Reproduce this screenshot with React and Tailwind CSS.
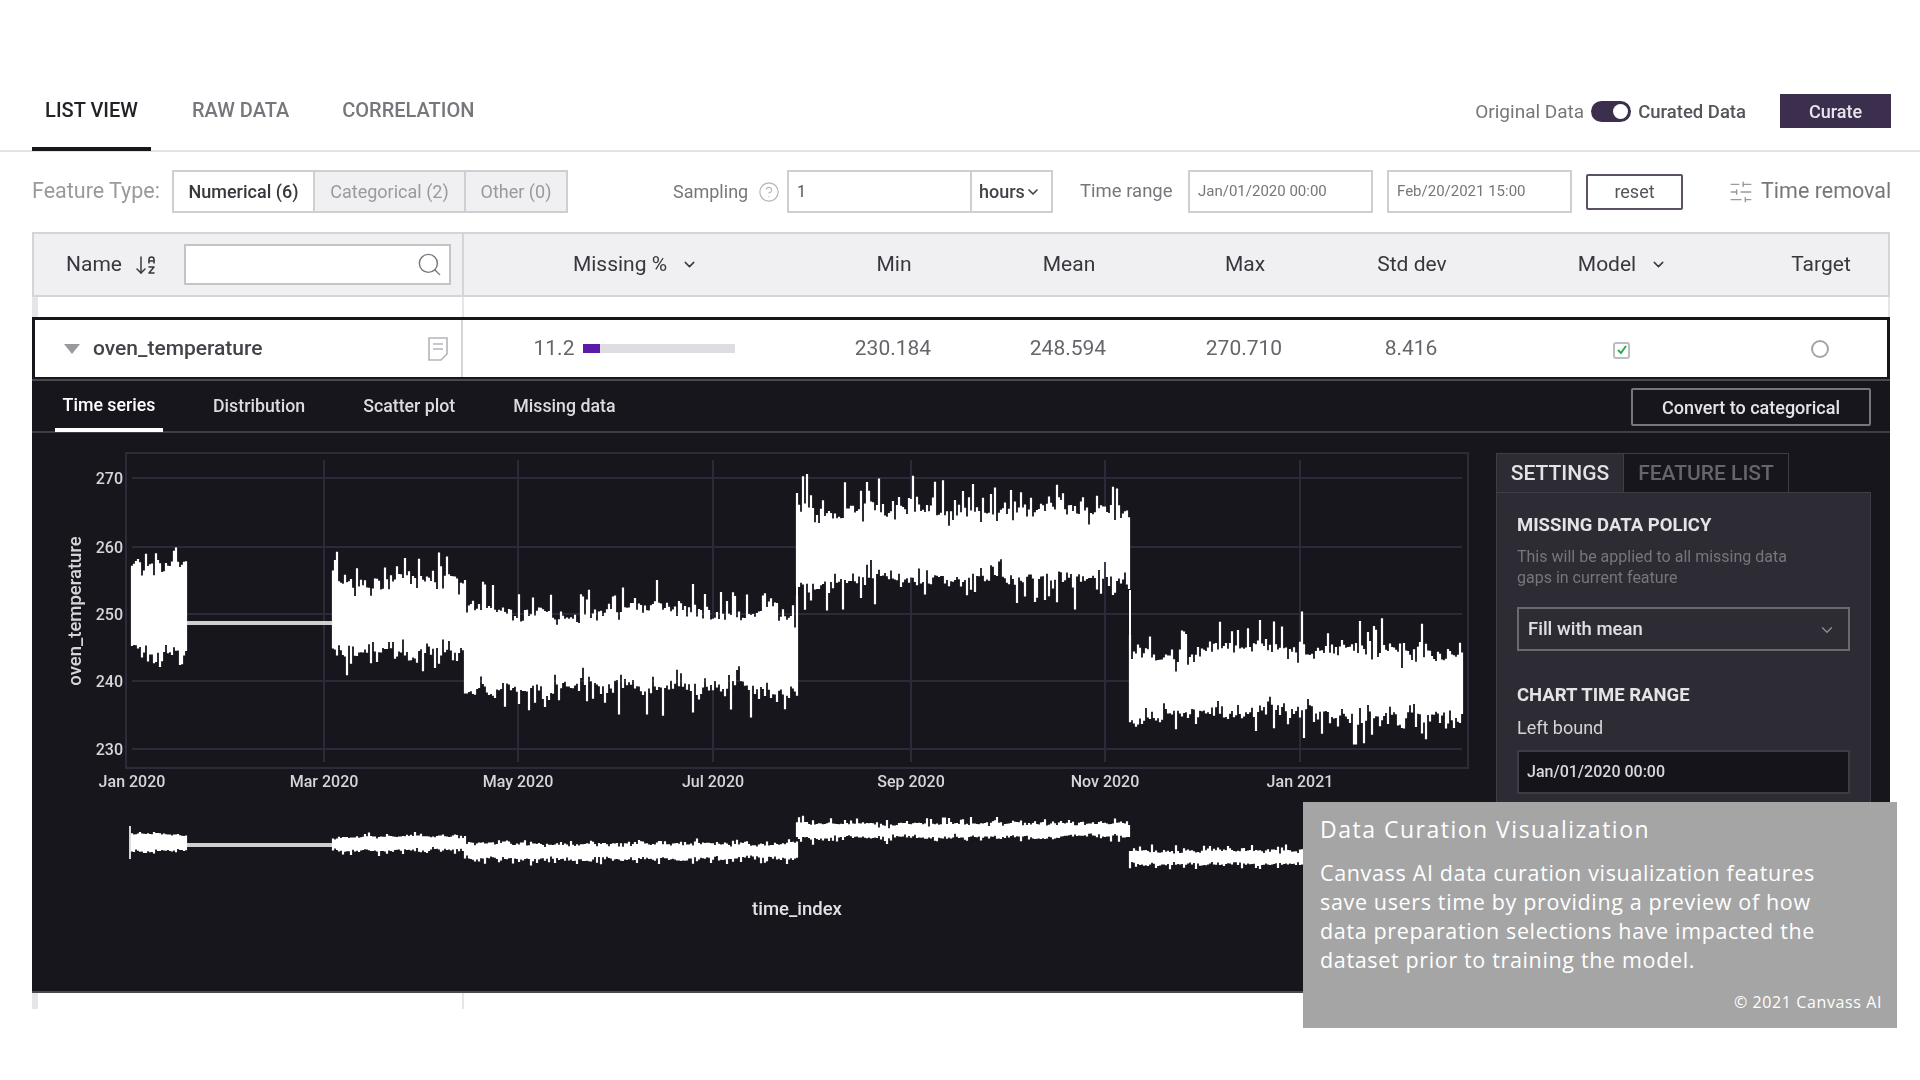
import React from 'react';
import { ArrowDownAZ, ChevronDown, CircleHelp, Search, SlidersHorizontal } from 'lucide-react';

// small seeded random so the signal stays the same on every load
const makeRandom = (seed) => () => {
    seed = (seed + 0x6d2b79f5) | 0;
    let t = Math.imul(seed ^ (seed >>> 15), 1 | seed);
    t = (t + Math.imul(t ^ (t >>> 7), 61 | t)) ^ t;
    return ((t ^ (t >>> 14)) >>> 0) / 4294967296;
};

const segments = [
    { from: 132, to: 187, top: 568, bottom: 650, up: 16, down: 15 },
    { from: 333, to: 465, top: 578, bottom: 650, up: 27, down: 27 },
    { from: 465, to: 797, top: 612, bottom: 688, up: 26, down: 30 },
    { from: 797, to: 1130, top: 510, bottom: 580, up: 34, down: 33 },
    { from: 1130, to: 1462, top: 650, bottom: 718, up: 34, down: 29 },
];

const signalPath = (seed, scale, offset) => {
    const random = makeRandom(seed);
    let d = '';
    let slowTop = 0;
    let slowBottom = 0;
    segments.forEach((s) => {
        for (let x = s.from; x <= s.to; x += 2) {
            slowTop += (random() - 0.5) * 6 - slowTop * 0.1;
            slowBottom += (random() - 0.5) * 6 - slowBottom * 0.1;
            const notchTop = random() < 0.14 ? 9 : 0;
            const notchBottom = random() < 0.14 ? 9 : 0;
            const top = s.top + slowTop + notchTop + 6 - random() * 10 - Math.pow(random(), 6) * s.up;
            const bottom = s.bottom + slowBottom - notchBottom - 6 + random() * 10 + Math.pow(random(), 6) * s.down;
            d += `M${x} ${(top * scale + offset).toFixed(1)}V${(bottom * scale + offset).toFixed(1)}`;
        }
    });
    return d;
};

const mainPath = signalPath(7, 1, 0);
const miniPath = signalPath(21, 0.2, 721);

const yTicks = [
    { label: '270', y: 478 },
    { label: '260', y: 547 },
    { label: '250', y: 614 },
    { label: '240', y: 681 },
    { label: '230', y: 749 },
];

const xTicks = [
    { label: 'Jan 2020', x: 132, grid: false },
    { label: 'Mar 2020', x: 324, grid: true },
    { label: 'May 2020', x: 518, grid: true },
    { label: 'Jul 2020', x: 713, grid: true },
    { label: 'Sep 2020', x: 911, grid: true },
    { label: 'Nov 2020', x: 1105, grid: true },
    { label: 'Jan 2021', x: 1300, grid: true },
];

const Chart = () => (
    <svg viewBox="32 433 1460 520" className="w-[1460px] h-[520px] shrink-0 font-[Roboto,sans-serif]">
        <rect x="126" y="453" width="1342" height="315" fill="none" stroke="#2e2a38" strokeWidth="2" />
        {yTicks.map((t) => (
            <g key={t.label}>
                <line x1="132" x2="1462" y1={t.y} y2={t.y} stroke="#2f2838" strokeWidth="2" />
                <text x="123" y={t.y + 6} textAnchor="end" className="text-[16px] font-medium fill-[#d6d6d8]">{t.label}</text>
            </g>
        ))}
        {xTicks.map((t) => (
            <g key={t.label}>
                {t.grid && <line x1={t.x} x2={t.x} y1="460" y2="762" stroke="#2f2838" strokeWidth="2" />}
                <text x={t.x} y="787" textAnchor="middle" className="text-[16px] font-medium fill-[#d6d6d8]">{t.label}</text>
            </g>
        ))}
        <text transform="translate(81 611) rotate(-90)" textAnchor="middle" className="text-[18.5px] font-medium fill-[#d6d6d8]">oven_temperature</text>
        <rect x="187" y="621" width="146" height="4" fill="#cfcfcf" />
        <path d={mainPath} stroke="#ffffff" strokeWidth="2.2" fill="none" />
        <path d="M797 580V612M1130 590V655" stroke="#ffffff" strokeWidth="2" fill="none" />
        <rect x="129" y="826" width="2" height="33" fill="#d8d8d8" />
        <rect x="187" y="843" width="146" height="4" fill="#cfcfcf" />
        <path d={miniPath} stroke="#ffffff" strokeWidth="2.2" fill="none" />
        <text x="797" y="915" textAnchor="middle" className="text-[18.5px] font-medium fill-[#e2e2e4]">time_index</text>
    </svg>
);

const Settings = () => (
    <div className="w-[375px] ml-[4px] mt-[20px] text-[#dcdce0]">
        <div className="flex h-[39px]">
            <div className="w-[128px] pt-[1px] bg-[#2d2b33] border border-b-0 border-[#3f3d46] flex items-center justify-center text-[21px] font-medium text-[#e4e4e6]">SETTINGS</div>
            <div className="w-[165px] pt-[1px] border border-b-0 border-l-0 border-[#3f3d46] flex items-center justify-center text-[21px] font-medium text-[#66656b]">FEATURE LIST</div>
        </div>
        <div className="bg-[#2d2b33] border border-[#3f3d46] h-[500px] px-[20px] pt-[20px]">
            <h4 className="text-[18.5px] leading-[24px] font-bold text-[#e4e4e6]">MISSING DATA POLICY</h4>
            <p className="mt-[9px] text-[16px] leading-[21px] text-[#77767c]">This will be applied to all missing data<br />gaps in current feature</p>
            <div className="mt-[19px] h-[44px] pt-[1px] border-2 border-[#6a696f] flex items-center justify-between pl-[9px] pr-[12px]">
                <span className="text-[18.5px] font-medium text-[#e0e0e2]">Fill with mean</span>
                <ChevronDown size={18} className="text-[#8a898e]" />
            </div>
            <h4 className="mt-[32px] text-[18.5px] leading-[24px] font-bold text-[#e4e4e6]">CHART TIME RANGE</h4>
            <p className="mt-[9px] text-[18px] leading-[24px] text-[#d4d4d6]">Left bound</p>
            <div className="mt-[10px] h-[44px] bg-[#15141a] border-2 border-[#3d3b44] flex items-center pl-[8px] text-[16px] font-medium text-[#d8d8da]">Jan/01/2020 00:00</div>
        </div>
    </div>
);

const App = () => {
    return (
        <div className="relative w-[1920px] h-[1080px] bg-white overflow-hidden font-[Roboto,sans-serif]">
            <div className="blur-[0.7px]">
                {/* Top tabs */}
                <div className="h-[152px] pt-[88px] flex border-b-2 border-[#e3e3e5]">
                    <div className="w-[32px]" />
                    <div className="flex h-[63px]">
                        <div className="w-[119px] h-[63px] pt-[7px] text-center border-b-4 border-[#17161d] text-[20px] font-medium text-[#222127]">LIST VIEW</div>
                        <div className="ml-[41px] pt-[7px] text-[20px] font-medium text-[#77767c]">RAW DATA</div>
                        <div className="ml-[53px] pt-[7px] text-[20px] font-medium text-[#77767c]">CORRELATION</div>
                    </div>
                    <div className="ml-auto mr-[29px] flex items-start pt-[6px]">
                        <span className="mt-[4px] text-[19px] text-[#77767c]">Original Data</span>
                        <div className="mx-[7px] mt-[7px] w-[40px] h-[21px] rounded-full bg-[#3b2f4d] flex items-center justify-end pr-[3px]">
                            <div className="w-[15px] h-[15px] rounded-full bg-white" />
                        </div>
                        <span className="mt-[5px] text-[18.5px] font-medium text-[#55545a]">Curated Data</span>
                        <button className="ml-[34px] w-[111px] h-[34px] bg-[#3b2f4d] text-[18px] font-medium text-[#e8e6ec]">Curate</button>
                    </div>
                </div>

                {/* Filters */}
                <div className="mt-[18px] h-[43px] pl-[32px] flex items-center text-[#77767c]">
                    <span className="w-[140px] text-[21.5px] text-[#9a999e]">Feature Type:</span>
                    <div className="w-[396px] h-[43px] flex border-2 border-[#cfced3] text-[18px]">
                        <div className="w-[141px] bg-white flex items-center justify-center font-medium text-[#38373d] border-r-2 border-[#cfced3]">Numerical (6)</div>
                        <div className="w-[151px] bg-[#f0eff2] flex items-center justify-center text-[#9a999e] border-r-2 border-[#cfced3]">Categorical (2)</div>
                        <div className="flex-1 bg-[#f0eff2] flex items-center justify-center text-[#9a999e]">Other (0)</div>
                    </div>
                    <span className="ml-[105px] w-[85px] text-[18px]">Sampling</span>
                    <CircleHelp size={22} strokeWidth={1.25} className="text-[#b5b4b9]" />
                    <div className="ml-[7px] w-[266px] h-[43px] flex border-2 border-[#cfced3]">
                        <div className="w-[183px] flex items-center pl-[8px] text-[16px] text-[#55545a] border-r-2 border-[#cfced3]">1</div>
                        <div className="flex-1 flex items-center pl-[7px] text-[18px] font-medium text-[#44434a]">hours<ChevronDown size={16} strokeWidth={2.5} /></div>
                    </div>
                    <span className="ml-[27px] w-[108px] text-[18.5px]">Time range</span>
                    <div className="w-[185px] h-[43px] flex items-center pl-[8px] border-2 border-[#cfced3] text-[15px] text-[#77767c]">Jan/01/2020 00:00</div>
                    <div className="ml-[14px] w-[185px] h-[43px] flex items-center pl-[8px] border-2 border-[#cfced3] text-[15px] text-[#77767c]">Feb/20/2021 15:00</div>
                    <button className="ml-[14px] w-[97px] h-[36px] border-2 border-[#5b5068] rounded-[2px] text-[18px] text-[#55545a]">reset</button>
                    <SlidersHorizontal size={26} strokeWidth={1.25} className="ml-[45px] text-[#9a999e]" />
                    <span className="ml-[7px] text-[21.5px] text-[#77767c]">Time removal</span>
                </div>

                {/* Table */}
                <div className="mt-[19px] ml-[32px] w-[1858px]">
                    <div className="h-[65px] flex bg-[#f0eff2] border-2 border-[#d5d4d9] text-[21px] text-[#38373d]">
                        <div className="w-[430px] flex items-center pl-[32px] border-r-2 border-[#d5d4d9]">
                            <span className="w-[68px]">Name</span>
                            <ArrowDownAZ size={24} strokeWidth={1.5} />
                            <div className="ml-[26px] w-[267px] h-[41px] bg-white border-2 border-[#c4c3c8] flex items-center justify-end pr-[6px]">
                                <Search size={27} strokeWidth={1.25} className="text-[#77767c]" />
                            </div>
                        </div>
                        <div className="flex-1 grid grid-cols-[343px_174px_176px_176px_158px_263px_134px] items-center text-center">
                            <div className="flex items-center justify-center gap-[14px]">Missing %<ChevronDown size={17} strokeWidth={2} /></div>
                            <div>Min</div>
                            <div>Mean</div>
                            <div>Max</div>
                            <div>Std dev</div>
                            <div className="flex items-center justify-center gap-[14px]">Model<ChevronDown size={17} strokeWidth={2} /></div>
                            <div>Target</div>
                        </div>
                    </div>
                    <div className="h-[20px] flex border-r-2 border-[#e6e5e8]">
                        <div className="w-[432px] h-full border-l-[6px] border-[#e6e5e8] border-r-2" />
                    </div>
                    <div className="w-[1858px] h-[62px] flex border-[3px] border-[#17161d] border-b-2 bg-white text-[21px] text-[#66656b]">
                        <div className="w-[430px] flex items-center border-r-2 border-[#d5d4d9]">
                            <svg width="18" height="10" viewBox="0 0 18 10" className="ml-[28px]"><path d="M1 0h16L9 10z" fill="#9a999e" /></svg>
                            <span className="ml-[12px] font-medium text-[#44434a]">oven_temperature</span>
                            <svg width="22" height="26" viewBox="0 0 22 26" fill="none" stroke="#b5b4b9" strokeWidth="1.6" className="ml-auto mr-[12px]">
                                <path d="M2 2h18v16l-6 6H2z" />
                                <path d="M6 8h10M6 13h10" />
                            </svg>
                        </div>
                        <div className="flex-1 grid grid-cols-[343px_174px_176px_176px_158px_263px_134px] items-center text-center">
                            <div className="flex items-center justify-center gap-[9px]">
                                <span>11.2</span>
                                <div className="w-[152px] h-[9px] bg-[#dedde1]">
                                    <div className="w-[17px] h-full bg-[#5b1aa8]" />
                                </div>
                            </div>
                            <div>230.184</div>
                            <div>248.594</div>
                            <div>270.710</div>
                            <div>8.416</div>
                            <div className="flex justify-center">
                                <div className="mt-[3px] w-[17px] h-[17px] rounded-[3px] border-2 border-[#bdbcc1] flex items-center justify-center">
                                    <svg width="12" height="12" viewBox="0 0 12 12" fill="none" stroke="#22b14c" strokeWidth="2"><path d="M2 6l3 3 5-7" /></svg>
                                </div>
                            </div>
                            <div className="flex justify-center">
                                <div className="w-[18px] h-[18px] rounded-full border-2 border-[#a5a4a9]" />
                            </div>
                        </div>
                    </div>

                    {/* Expanded row */}
                    <div className="h-[614px] bg-[#17161d] border-t-2 border-b-2 border-[#4a4950] overflow-hidden">
                        <div className="h-[52px] flex items-start border-b-2 border-[#3f3e45] text-[17.75px] font-medium text-[#dcdce0] pl-[23px]">
                            <div className="w-[108px] h-[51px] pt-[11px] text-center border-b-4 border-white text-white">Time series</div>
                            <div className="ml-[50px] pt-[12px]">Distribution</div>
                            <div className="ml-[58px] pt-[12px]">Scatter plot</div>
                            <div className="ml-[58px] pt-[12px]">Missing data</div>
                            <button className="ml-auto mr-[19px] mt-[7px] w-[240px] h-[38px] border-2 border-[#77767c] rounded-[2px] text-[18px] text-[#e4e4e6]">Convert to categorical</button>
                        </div>
                        <div className="flex">
                            <Chart />
                            <Settings />
                        </div>
                    </div>
                    <div className="h-[16px] flex">
                        <div className="w-[432px] h-full border-l-[6px] border-r-2 border-[#e6e5e8]" />
                    </div>
                </div>
            </div>

            {/* Caption */}
            <div className="absolute left-[1303px] top-[802px] w-[594px] h-[226px] bg-[#a5a5a5] pl-[17px] pr-[15px] pt-[12px] text-white font-['Open_Sans',sans-serif]">
                <h3 className="text-[23px] leading-[30px] font-medium tracking-[1.5px]">Data Curation Visualization</h3>
                <p className="mt-[14px] text-[21.5px] leading-[29px] font-normal tracking-[0.65px] whitespace-nowrap">Canvass AI data curation visualization features<br />save users time by providing a preview of how<br />data preparation selections have impacted the<br />dataset prior to training the model.</p>
                <p className="mt-[17px] text-[16px] leading-[22px] font-normal tracking-[0.6px] text-right">© 2021 Canvass AI</p>
            </div>
        </div>
    );
};

export default App;
